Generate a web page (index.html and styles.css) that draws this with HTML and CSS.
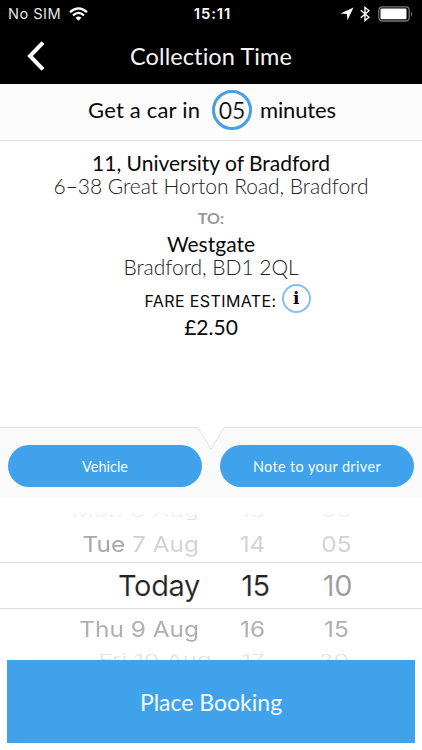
FILE: index.html
```html
<!DOCTYPE html>
<html lang="en">
<head>
<meta charset="utf-8">
<title>Collection Time</title>
<link rel="stylesheet" href="styles.css">
</head>
<body>
<div class="screen">
  <header class="top">
    <div class="status">
      <div class="carrier"><span class="sim">No SIM</span>
        <svg width="19" height="14" viewBox="0 0 19 14" fill="none" stroke="#fff" stroke-width="2.3"><path d="M1 5.2Q9.5-2.5 18 5.2"/><path d="M4 8.3Q9.5 3.4 15 8.3"/><path d="M6.6 10.8Q9.5 8.3 12.4 10.8L9.5 13.7Z" fill="#fff" stroke="none"/></svg>
      </div>
      <span class="clock">15:11</span>
      <div class="indicators">
        <svg width="14" height="14" viewBox="0 0 14 14"><path d="M13.5 .5L7.5 13.2L6.9 7.1L.5 6.5Z" fill="#fff"/></svg>
        <svg class="bluetooth" width="10" height="16" viewBox="0 0 10 16" fill="none" stroke="#fff" stroke-width="1.4"><path d="M.8 4.2L9 11.2L5 14.6V1.4L9 4.8L.8 11.8"/></svg>
        <svg class="battery" width="36" height="16" viewBox="0 0 36 16"><rect x=".8" y=".8" width="30.4" height="14.2" rx="3.4" fill="none" stroke="#777" stroke-width="1.3"/><rect x="2.5" y="2.5" width="26" height="10.8" rx="1" fill="#fff"/><path d="M33 5.2Q35.2 8 33 10.8Z" fill="#777"/></svg>
      </div>
    </div>
    <div class="nav">
      <svg class="back" width="18" height="30" viewBox="0 0 18 30" fill="none" stroke="#fff" stroke-width="4"><path d="M16 1.6L3 15L16 28.4"/></svg>
      <h1>Collection Time</h1>
    </div>
  </header>
  <section class="eta"><span class="eta-lead">Get a car in</span><span class="eta-ring">05</span><span class="eta-unit">minutes</span></section>
  <section class="trip">
    <div class="place from">11, University of Bradford</div>
    <div class="address">6–38 Great Horton Road, Bradford</div>
    <div class="to">TO:</div>
    <div class="place dest">Westgate</div>
    <div class="address">Bradford, BD1 2QL</div>
    <div class="fare"><span class="fare-label">FARE ESTIMATE:</span><span class="info">i</span></div>
    <div class="price">£2.50</div>
  </section>
  <section class="options">
    <svg class="notch" width="422" height="24" viewBox="0 0 422 24"><path d="M198 0L211 22L224 0Z" fill="#fff"/><path d="M0 .5H198L211 22.5L224 .5H422" fill="none" stroke="#e1e1e1"/></svg>
    <button class="pill vehicle">Vehicle</button>
    <button class="pill note">Note to your driver</button>
  </section>
  <section class="picker">
    <div class="row row-first"><span class="day">Mon 6 Aug</span><span class="hour">13</span><span class="min">00</span></div>
    <div class="row row-before"><span class="day"><b>Tue</b> 7 Aug</span><span class="hour">14</span><span class="min">05</span></div>
    <div class="row row-current"><span class="day">Today</span><span class="hour">15</span><span class="min">10</span></div>
    <div class="row row-after"><span class="day">Thu 9 Aug</span><span class="hour">16</span><span class="min">15</span></div>
    <div class="row row-last"><span class="day">Fri 10 Aug</span><span class="hour">17</span><span class="min">20</span></div>
  </section>
  <button class="book">Place Booking</button>
</div>
</body>
</html>
```

FILE: styles.css
```css
* { box-sizing: border-box; }
body { margin: 0; background: #fff; font-family: Lato, "Liberation Sans", sans-serif; color: #080808; }
button { border: 0; padding: 0; font-family: inherit; color: #f4fbff; background: #40a2eb; }
.screen { width: 422px; height: 750px; overflow: hidden; display: flex; flex-direction: column; white-space: nowrap; }

.top { height: 84px; flex: none; background: #000; color: #fff; }
.status { height: 28px; display: grid; grid-template-columns: 1fr auto 1fr; align-items: center; padding: 0 8px; font: 14.6px Inter, sans-serif; }
.carrier { display: flex; align-items: center; gap: 8px; }
.sim { letter-spacing: .45px; color: #e5e5e5; }
.clock { font-weight: 600; font-size: 14.8px; letter-spacing: .9px; padding-left: 3px; }
.indicators { display: flex; align-items: center; justify-content: flex-end; }
.bluetooth { margin-left: 6px; }
.battery { margin-left: 8px; }
.nav { height: 55px; display: flex; align-items: center; padding-left: 27px; }
.back { flex: none; }
h1 { margin: 0 0 0 85px; font-size: 23.5px; font-weight: 400; letter-spacing: .1px; color: #f4f4f4; }

.eta { height: 57px; flex: none; display: flex; align-items: center; padding: 0 0 5px 88px; background: #fcfcfc; border-bottom: 1px solid #e5e5e5; font-size: 22px; }
.eta-lead { width: 124px; letter-spacing: .2px; }
.eta-ring { width: 40px; height: 40px; border: 3px solid #479fe0; border-radius: 50%; line-height: 34px; text-align: center; font-size: 23px; -webkit-text-stroke: .2px #fcfcfc; }
.eta-unit { margin-left: 8px; letter-spacing: -.15px; }

.trip { height: 286px; flex: none; text-align: center; padding-top: 10px; }
.place { font-size: 21px; line-height: 24px; height: 23px; }
.address { font-size: 21px; font-weight: 300; line-height: 23px; color: #222; letter-spacing: -.03px; }
.to { margin-top: 9px; line-height: 24px; font-size: 16px; font-weight: 700; color: #999; }
.dest { margin-top: 2px; }
.fare { display: flex; justify-content: center; align-items: center; height: 30px; margin-top: 5px; padding-left: 33px; }
.fare-label { font: 16px Inter, sans-serif; letter-spacing: .4px; padding-top: 5px; }
.info { width: 29px; height: 29px; margin-left: 5px; border: 2px solid #83c1f0; border-radius: 50%; font: bold 17px/24px "DejaVu Serif", serif; }
.price { line-height: 27px; font-size: 21px; }

.options { position: relative; height: 71px; flex: none; background: #fafafa; display: flex; gap: 18px; padding: 18px 8px 11px; }
.notch { position: absolute; left: 0; top: 0; }
.pill { position: relative; flex: 1; border-radius: 21px; font-size: 14.5px; }
.note { letter-spacing: .35px; }

.picker { height: 162px; flex: none; overflow: hidden; display: flex; flex-direction: column; font-family: Inter, sans-serif; }
.row { display: grid; align-items: center; flex: none; font-size: 22px; font-weight: 400; grid-template-columns: 199px 107px 61px; }
.day { text-align: right; transform-origin: right center; }
.hour, .min { text-align: center; }
.row b { font-weight: 400; color: #a8a8a8; }
.row-first span { transform: scale(1.12, .65); }
.row-before span, .row-after span { transform: scaleX(1.11); }
.row-first { height: 25px; padding-top: 1px; color: #d8d8d8; -webkit-mask-image: linear-gradient(transparent 52%, #000 100%); mask-image: linear-gradient(transparent 52%, #000 100%); }
.row-before { height: 39px; padding-top: 2px; color: #d3d3d3; }
.row-current { grid-template-columns: 200px 111px 53px; height: 47px; border-top: 1px solid #dcdcdc; border-bottom: 1px solid #dcdcdc; color: #222; font-size: 29px; letter-spacing: -.35px; -webkit-text-stroke: .2px #fff; }
.row-current .min { color: #999; }
.row-after { height: 40px; color: #b0b0b0; }
.row-last { height: 20px; grid-template-columns: 212px 82px 80px; line-height: 20px; color: #e6e6e6; }
.row-last span { transform: scale(1.1, .6); }
.book { width: 408px; height: 83px; flex: none; margin: 0 0 0 7px; font-size: 23px; }
```
